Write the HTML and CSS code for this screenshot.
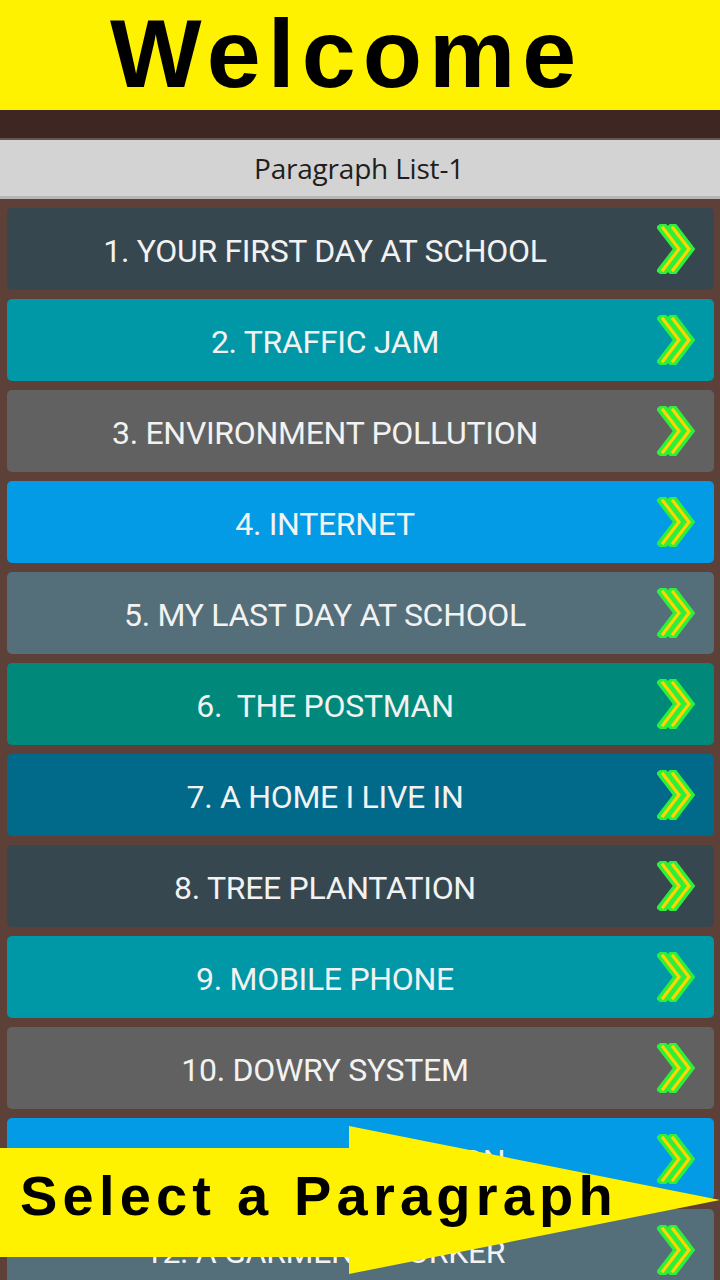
FILE: index.html
```html
<!DOCTYPE html>
<html>
<head>
<meta charset="utf-8">
<link rel="stylesheet" href="styles.css">
</head>
<body>
<div class="screen">
  <header class="banner"><span class="banner-text">Welcome</span></header>
  <div class="appbar"></div>
  <div class="titlebar">Paragraph List-1</div>
  <ul class="list">
    <li class="item c1"><span class="label">1. YOUR FIRST DAY AT SCHOOL</span><span class="go"><svg viewBox="0 0 40 50" width="40" height="50"><g fill="none" stroke-linecap="square" stroke-linejoin="miter"><polyline class="g" points="6,4 22,25 6,46"/><polyline class="g" points="16,4 32,25 16,46"/><polyline class="y" points="6,4 22,25 6,46"/><polyline class="y" points="16,4 32,25 16,46"/></g></svg></span></li>
    <li class="item c2"><span class="label">2. TRAFFIC JAM</span><span class="go"><svg viewBox="0 0 40 50" width="40" height="50"><g fill="none" stroke-linecap="square" stroke-linejoin="miter"><polyline class="g" points="6,4 22,25 6,46"/><polyline class="g" points="16,4 32,25 16,46"/><polyline class="y" points="6,4 22,25 6,46"/><polyline class="y" points="16,4 32,25 16,46"/></g></svg></span></li>
    <li class="item c3"><span class="label">3. ENVIRONMENT POLLUTION</span><span class="go"><svg viewBox="0 0 40 50" width="40" height="50"><g fill="none" stroke-linecap="square" stroke-linejoin="miter"><polyline class="g" points="6,4 22,25 6,46"/><polyline class="g" points="16,4 32,25 16,46"/><polyline class="y" points="6,4 22,25 6,46"/><polyline class="y" points="16,4 32,25 16,46"/></g></svg></span></li>
    <li class="item c4"><span class="label">4. INTERNET</span><span class="go"><svg viewBox="0 0 40 50" width="40" height="50"><g fill="none" stroke-linecap="square" stroke-linejoin="miter"><polyline class="g" points="6,4 22,25 6,46"/><polyline class="g" points="16,4 32,25 16,46"/><polyline class="y" points="6,4 22,25 6,46"/><polyline class="y" points="16,4 32,25 16,46"/></g></svg></span></li>
    <li class="item c5"><span class="label">5. MY LAST DAY AT SCHOOL</span><span class="go"><svg viewBox="0 0 40 50" width="40" height="50"><g fill="none" stroke-linecap="square" stroke-linejoin="miter"><polyline class="g" points="6,4 22,25 6,46"/><polyline class="g" points="16,4 32,25 16,46"/><polyline class="y" points="6,4 22,25 6,46"/><polyline class="y" points="16,4 32,25 16,46"/></g></svg></span></li>
    <li class="item c6"><span class="label">6.&nbsp; THE POSTMAN</span><span class="go"><svg viewBox="0 0 40 50" width="40" height="50"><g fill="none" stroke-linecap="square" stroke-linejoin="miter"><polyline class="g" points="6,4 22,25 6,46"/><polyline class="g" points="16,4 32,25 16,46"/><polyline class="y" points="6,4 22,25 6,46"/><polyline class="y" points="16,4 32,25 16,46"/></g></svg></span></li>
    <li class="item c7"><span class="label">7. A HOME I LIVE IN</span><span class="go"><svg viewBox="0 0 40 50" width="40" height="50"><g fill="none" stroke-linecap="square" stroke-linejoin="miter"><polyline class="g" points="6,4 22,25 6,46"/><polyline class="g" points="16,4 32,25 16,46"/><polyline class="y" points="6,4 22,25 6,46"/><polyline class="y" points="16,4 32,25 16,46"/></g></svg></span></li>
    <li class="item c1"><span class="label">8. TREE PLANTATION</span><span class="go"><svg viewBox="0 0 40 50" width="40" height="50"><g fill="none" stroke-linecap="square" stroke-linejoin="miter"><polyline class="g" points="6,4 22,25 6,46"/><polyline class="g" points="16,4 32,25 16,46"/><polyline class="y" points="6,4 22,25 6,46"/><polyline class="y" points="16,4 32,25 16,46"/></g></svg></span></li>
    <li class="item c2"><span class="label">9. MOBILE PHONE</span><span class="go"><svg viewBox="0 0 40 50" width="40" height="50"><g fill="none" stroke-linecap="square" stroke-linejoin="miter"><polyline class="g" points="6,4 22,25 6,46"/><polyline class="g" points="16,4 32,25 16,46"/><polyline class="y" points="6,4 22,25 6,46"/><polyline class="y" points="16,4 32,25 16,46"/></g></svg></span></li>
    <li class="item c3"><span class="label">10. DOWRY SYSTEM</span><span class="go"><svg viewBox="0 0 40 50" width="40" height="50"><g fill="none" stroke-linecap="square" stroke-linejoin="miter"><polyline class="g" points="6,4 22,25 6,46"/><polyline class="g" points="16,4 32,25 16,46"/><polyline class="y" points="6,4 22,25 6,46"/><polyline class="y" points="16,4 32,25 16,46"/></g></svg></span></li>
    <li class="item c4"><span class="label">11. FOOD ADULTERATION</span><span class="go"><svg viewBox="0 0 40 50" width="40" height="50"><g fill="none" stroke-linecap="square" stroke-linejoin="miter"><polyline class="g" points="6,4 22,25 6,46"/><polyline class="g" points="16,4 32,25 16,46"/><polyline class="y" points="6,4 22,25 6,46"/><polyline class="y" points="16,4 32,25 16,46"/></g></svg></span></li>
    <li class="item c5"><span class="label">12. A GARMENT WORKER</span><span class="go"><svg viewBox="0 0 40 50" width="40" height="50"><g fill="none" stroke-linecap="square" stroke-linejoin="miter"><polyline class="g" points="6,4 22,25 6,46"/><polyline class="g" points="16,4 32,25 16,46"/><polyline class="y" points="6,4 22,25 6,46"/><polyline class="y" points="16,4 32,25 16,46"/></g></svg></span></li>
  </ul>
  <div class="callout">
    <svg class="callout-shape" viewBox="0 0 720 160" width="720" height="160" preserveAspectRatio="none"><polygon points="0,22 349,22 349,0 720,74 349,148 349,131 0,131" fill="#fff200"/></svg>
    <span class="callout-text">Select a Paragraph</span>
  </div>
</div>
</body>
</html>
```

FILE: styles.css
```css
html, body {
  margin: 0;
  padding: 0;
}
body {
  background: #5d4037;
  font-family: "Liberation Sans", Arial, sans-serif;
}
.screen {
  position: relative;
  width: 720px;
  height: 1280px;
  overflow: hidden;
  background: #5d4037;
}
.banner {
  height: 110px;
  background: #fff200;
  display: flex;
  align-items: flex-end;
  padding-left: 110px;
  box-sizing: border-box;
}
.banner-text {
  font-family: "Liberation Sans", Arial, sans-serif;
  font-weight: 700;
  font-size: 97px;
  line-height: 1;
  letter-spacing: 7px;
  color: #000;
  padding-bottom: 8px;
}
.appbar {
  height: 28px;
  background: #3e2723;
  border-bottom: 2px solid #6a5550;
}
.titlebar {
  height: 59px;
  background: #d3d3d3;
  border-bottom: 3px solid #b9b5b4;
  display: flex;
  align-items: center;
  justify-content: center;
  font-family: "Open Sans", "Noto Sans", sans-serif;
  font-size: 28px;
  color: #1e1e1e;
  letter-spacing: -0.2px;
  padding-right: 2px;
  box-sizing: border-box;
}
.list {
  list-style: none;
  margin: 0;
  padding: 9px 6px 0 7px;
  display: flex;
  flex-direction: column;
  gap: 9px;
}
.item {
  height: 82px;
  border-radius: 5px;
  display: flex;
  align-items: center;
  flex: none;
}
.c1 { background: #37474f; }
.c2 { background: #0097a7; }
.c3 { background: #616161; }
.c4 { background: #039be5; }
.c5 { background: #546e7a; }
.c6 { background: #00897b; }
.c7 { background: #01698a; }
.label {
  flex: 1;
  text-align: center;
  font-family: Roboto, "Liberation Sans", sans-serif;
  font-size: 32px;
  color: #f2f2f2;
  letter-spacing: -0.3px;
  white-space: nowrap;
  padding-top: 4px;
}
.go {
  width: 71px;
  flex: none;
  display: flex;
  align-items: center;
  padding-left: 14px;
  box-sizing: border-box;
}
.go svg { display: block; }
.g {
  stroke: #2cf03a;
  stroke-width: 10;
}
.y {
  stroke: #ffd400;
  stroke-width: 3.2;
}
.callout {
  position: absolute;
  left: 0;
  top: 1126px;
  width: 720px;
  height: 160px;
}
.callout-shape {
  position: absolute;
  left: 0;
  top: 0;
  display: block;
}
.callout-text {
  position: absolute;
  left: 20px;
  top: 42px;
  font-family: "Liberation Sans", Arial, sans-serif;
  font-weight: 700;
  font-size: 56px;
  line-height: 1;
  letter-spacing: 5.2px;
  color: #000;
  white-space: nowrap;
}
```
